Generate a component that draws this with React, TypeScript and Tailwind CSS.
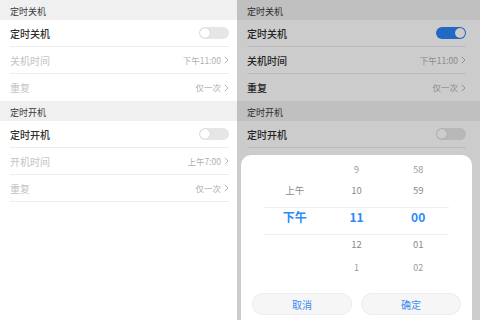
import React from 'react';

type RowProps = {
    label: string;
    value?: string;
    toggle?: 'on' | 'off';
    faded?: boolean;
    last?: boolean;
    pr: string;
};

const Chevron = () => (
    <svg width="5" height="8" viewBox="0 0 5 8" className="ml-[3px]">
        <polyline points="0.8,0.8 4,4 0.8,7.2" fill="none" stroke="#b5b5b5" strokeWidth="1" />
    </svg>
);

const Toggle = ({on}: {on: boolean}) => (
    <div className={`flex h-[12px] w-[30px] items-center rounded-full px-[1px] ${on ? 'justify-end bg-[#2a84f5]' : 'justify-start bg-[#e6e6e6]'}`}>
        <div className="h-[10px] w-[10px] rounded-full bg-white shadow-[0_0_1px_rgba(0,0,0,0.3)]" />
    </div>
);

const Row = ({label, value, toggle, faded, last, pr}: RowProps) => (
    <div className={`flex h-[27px] items-center ${pr}`}>
        <div className={`flex h-full flex-1 items-center justify-between ${last ? '' : 'border-b border-[#ececec]'}`}>
            <span className={`text-[10px] ${faded ? 'text-[#c4c4c4]' : 'font-medium text-[#2e2e2e]'}`}>{label}</span>
            {toggle && <Toggle on={toggle === 'on'} />}
            {value && (
                <span className="flex items-center text-[8.5px] text-[#b0b0b0]">
                    {value}
                    <Chevron />
                </span>
            )}
        </div>
    </div>
);

const Header = ({title}: {title: string}) => (
    <div className="flex h-[20px] items-end bg-[#f0f0f0] pb-[2px] pl-[10px] text-[9px] text-[#3a3a3a]">
        {title}
    </div>
);

const Settings = ({active, pr}: {active: boolean; pr: string}) => (
    <div className="flex flex-col pl-[10px]">
        <div className="-ml-[10px]"><Header title="定时关机" /></div>
        <Row label="定时关机" toggle={active ? 'on' : 'off'} pr={pr} />
        <Row label="关机时间" value="下午11:00" faded={!active} pr={pr} />
        <Row label="重复" value="仅一次" faded={!active} last pr={pr} />
        <div className="-ml-[10px]"><Header title="定时开机" /></div>
        <Row label="定时开机" toggle="off" pr={pr} />
        <Row label="开机时间" value="上午7:00" faded pr={pr} />
        <Row label="重复" value="仅一次" faded pr={pr} />
    </div>
);

const PickerCol = ({items}: {items: string[]}) => (
    <div className="flex flex-1 flex-col items-center">
        <div className="flex h-[21px] items-center text-[9px] text-[#9a9a9a]">{items[0]}</div>
        <div className="flex h-[21px] items-center text-[9.5px] text-[#8a8a8a]">{items[1]}</div>
        <div className="h-[2px]" />
        <div className="flex h-[28px] items-center text-[12px] font-bold text-[#2b8cf7]">{items[2]}</div>
        <div className="flex h-[26px] items-center text-[9.5px] text-[#8a8a8a]">{items[3]}</div>
        <div className="flex h-[22px] items-center text-[9px] text-[#9a9a9a]">{items[4]}</div>
    </div>
);

const TimeSheet = () => (
    <div className="absolute bottom-0 left-[4px] right-[8px] top-[155px] rounded-t-[10px] bg-white">
        <div className="relative mx-[23px] mt-[4px] flex">
            <div className="absolute left-0 right-0 top-[48px] h-[28px] border-y border-[#efefef]" />
            <PickerCol items={['', '上午', '下午', '', '']} />
            <PickerCol items={['9', '10', '11', '12', '1']} />
            <PickerCol items={['58', '59', '00', '01', '02']} />
        </div>
        <div className="mt-[14px] flex gap-[9px] px-[11px]">
            <button className="h-[22px] w-[100px] rounded-full border border-[#ececec] bg-[#f6f6f6] text-[10px] text-[#3a8cf0]">取消</button>
            <button className="h-[22px] w-[100px] rounded-full border border-[#ececec] bg-[#f6f6f6] text-[10px] text-[#3a8cf0]">确定</button>
        </div>
    </div>
);

export default function App() {
    return (
        <div className="flex h-[320px] w-[480px] overflow-hidden bg-white font-['Noto_Sans_CJK_SC',sans-serif]">
            <div className="h-full w-[237px]">
                <Settings active={false} pr="pr-[8px]" />
            </div>
            <div className="relative h-full w-[243px] bg-white">
                <Settings active={true} pr="pr-[14px]" />
                <div className="absolute inset-0 bg-black/20" />
                <TimeSheet />
            </div>
        </div>
    );
}
